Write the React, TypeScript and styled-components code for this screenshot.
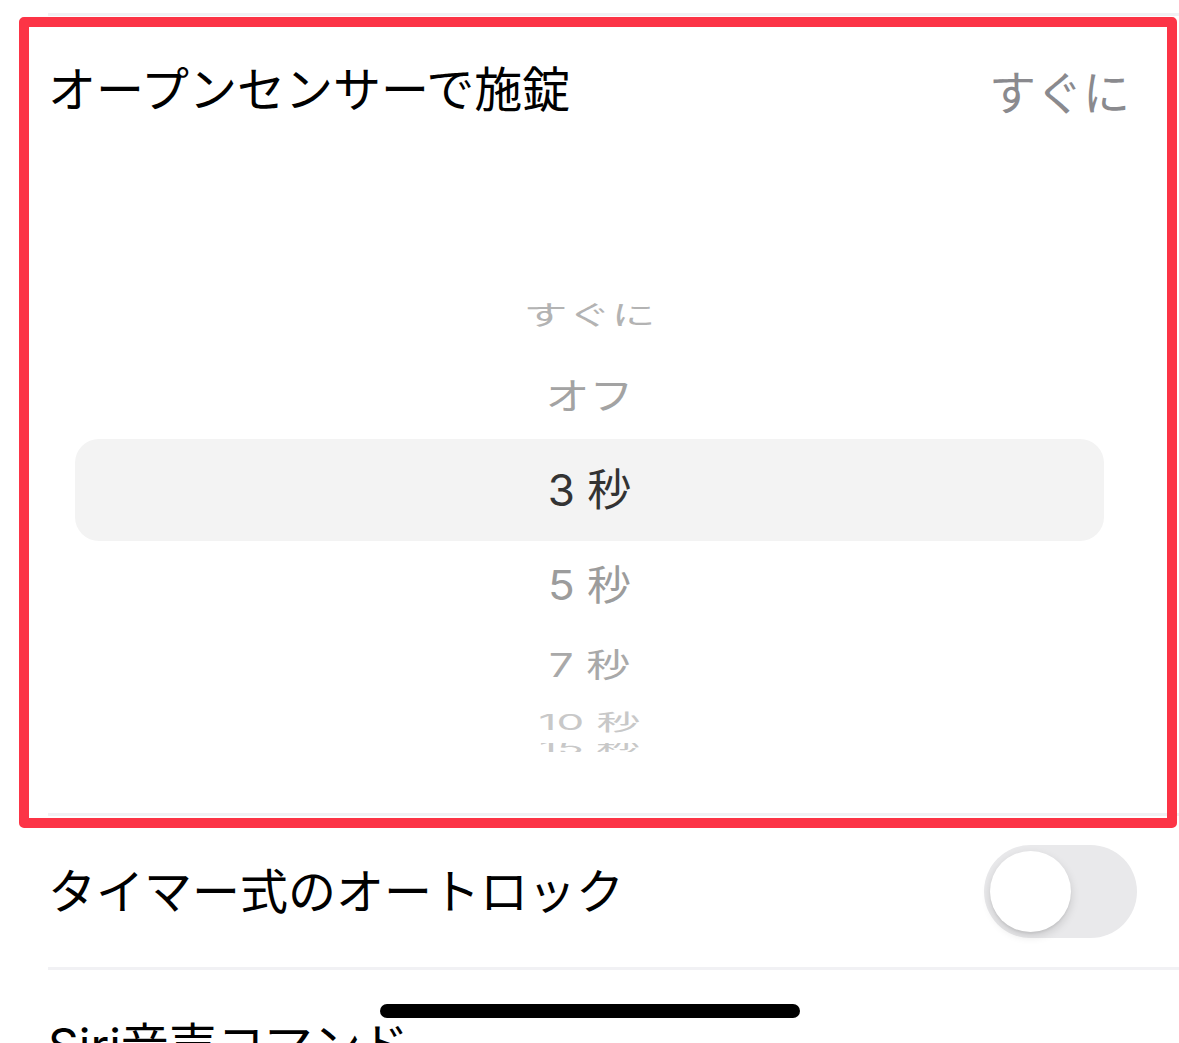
import styled, { createGlobalStyle } from 'styled-components';

const GlobalStyle = createGlobalStyle`
  html, body {
    margin: 0;
    padding: 0;
    background: #fff;
  }
  body {
    font-family: "Noto Sans CJK JP", "Noto Sans", sans-serif;
    -webkit-font-smoothing: antialiased;
  }
`;

const Screen = styled.div`
  position: relative;
  width: 1179px;
  height: 1043px;
  overflow: hidden;
  background: #fff;
`;

const PrevCell = styled.div`
  height: 13px;
`;

const Separator = styled.div`
  height: 3px;
  margin-left: 48px;
  background: #f1f1f4;
`;

const Row = styled.div<{ $h: number; $lift?: number }>`
  display: flex;
  align-items: center;
  justify-content: space-between;
  height: ${(p) => p.$h}px;
  margin-left: 48px;
  padding-right: 42px;
  padding-bottom: ${(p) => p.$lift ?? 0}px;
  box-sizing: border-box;
`;

const Label = styled.span`
  font-family: "Inter", "Noto Sans CJK JP", sans-serif;
  font-size: 48px;
  line-height: 1;
  color: #000;
`;

const Value = styled.span`
  font-family: "Noto Sans CJK JP", sans-serif;
  font-size: 47px;
  line-height: 1;
  color: #8a8a8e;
  margin-right: 7px;
`;

const PickerCell = styled.div`
  height: 645px;
  display: flex;
  flex-direction: column;
`;

const Wheel = styled.div`
  flex: 0 0 auto;
  display: flex;
  flex-direction: column;
  padding-top: 107px;
`;

const Slot = styled.div<{ $h: number; $selected?: boolean }>`
  flex: 0 0 ${(p) => p.$h}px;
  display: flex;
  align-items: center;
  justify-content: center;
  overflow: hidden;
  margin: ${(p) => (p.$selected ? '2px 75px 0' : '0')};
  border-radius: ${(p) => (p.$selected ? '24px' : '0')};
  background: ${(p) => (p.$selected ? '#f3f3f3' : 'transparent')};
`;

const SlotText = styled.span<{ $scale: number; $color: string }>`
  display: block;
  font-family: "Inter", "Noto Sans CJK JP", sans-serif;
  font-size: 44px;
  line-height: 44px;
  height: 44px;
  flex: 0 0 auto;
  color: ${(p) => p.$color};
  transform: scaleY(${(p) => p.$scale});
  white-space: pre;
`;

const Toggle = styled.div`
  width: 153px;
  height: 93px;
  border-radius: 47px;
  background: #e9e9eb;
  display: flex;
  align-items: center;
  padding-left: 6px;
  box-sizing: border-box;
`;

const Knob = styled.div`
  width: 81px;
  height: 81px;
  border-radius: 50%;
  background: #fff;
  box-shadow: 0 4px 10px rgba(0, 0, 0, 0.14), 0 2px 2px rgba(0, 0, 0, 0.05);
`;

const HomeIndicator = styled.div`
  position: absolute;
  left: 380px;
  top: 1004px;
  width: 420px;
  height: 14px;
  border-radius: 7px;
  background: #000;
`;

const Highlight = styled.div`
  position: absolute;
  left: 19px;
  top: 17px;
  width: 1158px;
  height: 811px;
  box-sizing: border-box;
  border: 10px solid #fc3446;
  border-radius: 5px;
  pointer-events: none;
`;

const items = [
  { text: 'すぐに', h: 80, scale: 0.62, color: '#b3b3b3' },
  { text: 'オフ', h: 82, scale: 0.85, color: '#a3a3a3' },
  { text: '3 秒', h: 102, scale: 1, color: '#333333', selected: true },
  { text: '5 秒', h: 88, scale: 0.92, color: '#9c9c9c' },
  { text: '7 秒', h: 72, scale: 0.75, color: '#a9a9a9' },
  { text: '10 秒', h: 42, scale: 0.5, color: '#c8c8c8' },
  { text: '15 秒', h: 9, scale: 0.38, color: '#c8c8c8' },
];

export default function App() {
  return (
    <>
      <GlobalStyle />
      <Screen>
        <PrevCell />
        <Separator />
        <Row $h={152} $lift={5}>
          <Label>オープンセンサーで施錠</Label>
          <Value>すぐに</Value>
        </Row>
        <PickerCell>
          <Wheel>
            {items.map((it) => (
              <Slot key={it.text} $h={it.h} $selected={it.selected}>
                <SlotText $scale={it.scale} $color={it.color}>
                  {it.text}
                </SlotText>
              </Slot>
            ))}
          </Wheel>
        </PickerCell>
        <Separator />
        <Row $h={151}>
          <Label>タイマー式のオートロック</Label>
          <Toggle>
            <Knob />
          </Toggle>
        </Row>
        <Separator />
        <Row $h={151}>
          <Label>Siri音声コマンド</Label>
        </Row>
        <HomeIndicator />
        <Highlight />
      </Screen>
    </>
  );
}
